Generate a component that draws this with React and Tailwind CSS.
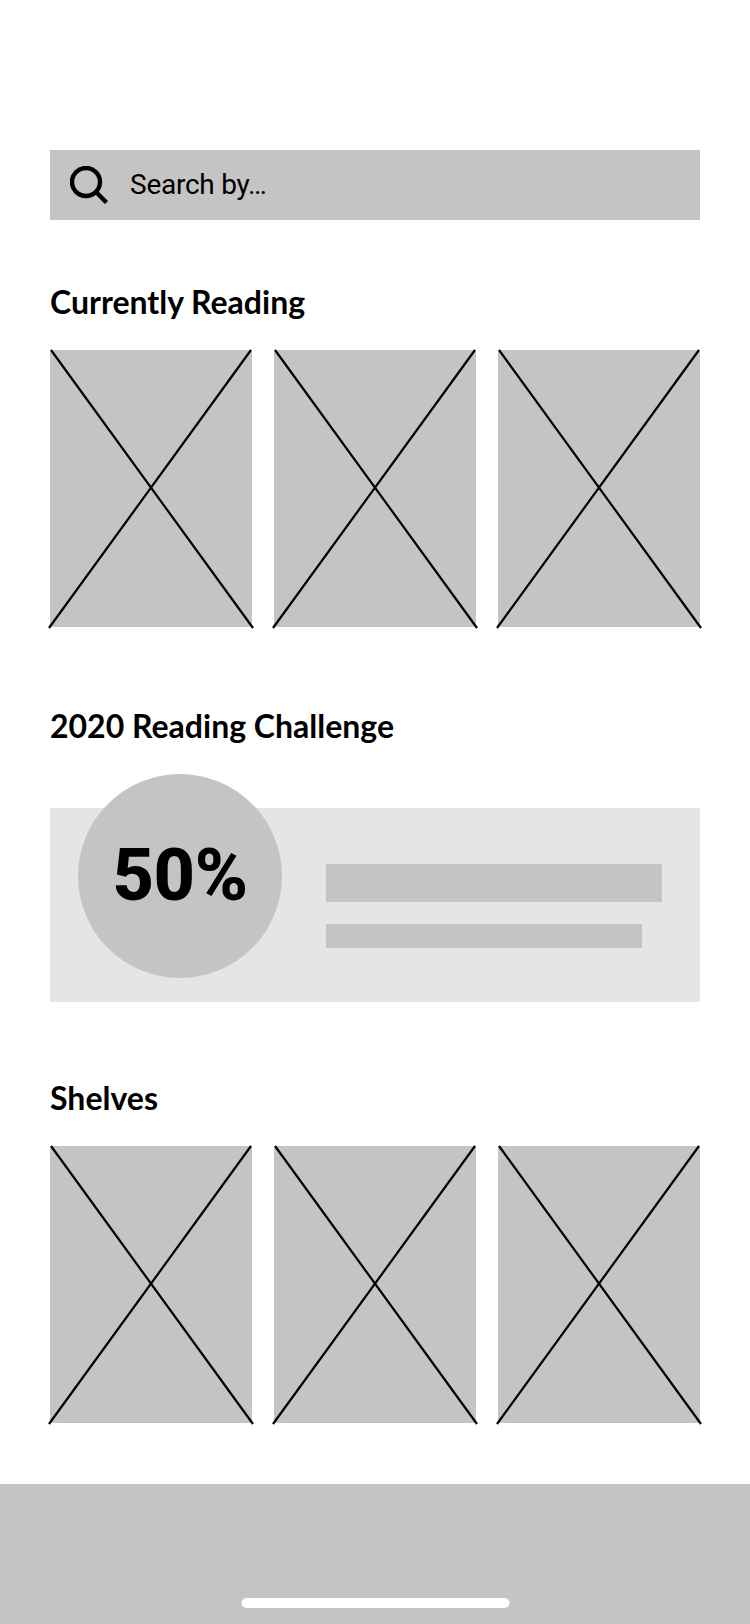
const Cover = () => {
  return (
    <div className="relative h-[277px] bg-[#c4c4c4]">
      <svg
        className="absolute inset-0 h-full w-full overflow-visible"
        viewBox="0 0 202 277"
        preserveAspectRatio="none"
        fill="none"
        stroke="#000"
        strokeWidth="2.2"
      >
        <path d="M1 0L203 278" />
        <path d="M201 0L-1 278" />
      </svg>
    </div>
  );
};

const CoverRow = () => {
  return (
    <div className="grid grid-cols-3 gap-[22px]">
      <Cover />
      <Cover />
      <Cover />
    </div>
  );
};

const Heading = ({ children, className }) => {
  return (
    <h2 className={`font-['Lato',sans-serif] text-[32px] leading-[40px] font-bold text-black ${className}`}>
      {children}
    </h2>
  );
};

export default function App() {
  return (
    <div className="flex min-h-[1624px] w-[750px] flex-col bg-white">
      <main className="flex-1 px-[50px] pt-[150px]">
        <div className="flex h-[70px] items-center bg-[#c4c4c4] pl-[20px]">
          <svg className="h-[38px] w-[38px]" viewBox="0 0 38 38" fill="none" stroke="#000" strokeWidth="4.4">
            <circle cx="16" cy="16" r="14" />
            <path d="M26 26L36.5 36.5" />
          </svg>
          <span className="ml-[22px] font-['Roboto',sans-serif] text-[28px] tracking-[-0.25px] text-black">Search by…</span>
        </div>

        <Heading className="mt-[62px] mb-[28px]">Currently Reading</Heading>
        <CoverRow />

        <Heading className="mt-[79px] mb-[62px]">2020 Reading Challenge</Heading>
        <div className="flex h-[194px] bg-[#e5e5e5] pl-[28px]">
          <div className="-mt-[34px] flex h-[204px] w-[204px] shrink-0 items-center justify-center rounded-full bg-[#c4c4c4]">
            <span className="font-['Roboto',sans-serif] text-[72px] font-extrabold tracking-[-0.4px] text-black">50%</span>
          </div>
          <div className="ml-[44px] flex flex-1 flex-col pt-[56px]">
            <div className="h-[38px] w-[336px] bg-[#c4c4c4]" />
            <div className="mt-[22px] h-[24px] w-[316px] bg-[#c4c4c4]" />
          </div>
        </div>

        <Heading className="mt-[76px] mb-[28px]">Shelves</Heading>
        <CoverRow />
      </main>

      <footer className="flex h-[140px] items-end justify-center bg-[#c4c4c4] pb-[16px]">
        <div className="h-[10px] w-[268px] translate-x-[0.5px] rounded-full bg-white" />
      </footer>
    </div>
  );
}
